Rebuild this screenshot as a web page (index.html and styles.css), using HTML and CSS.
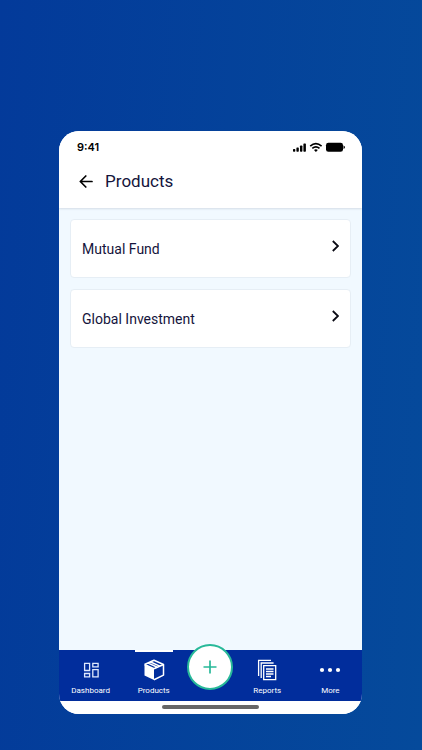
FILE: index.html
```html
<!DOCTYPE html>
<html lang="en">
<head>
<meta charset="utf-8">
<meta name="viewport" content="width=device-width, initial-scale=1">
<title>Products</title>
<link rel="stylesheet" href="styles.css">
</head>
<body>
<div class="phone">
  <header class="header">
    <div class="status">
      <span class="time">9:41</span>
      <svg class="status-icons" width="54" height="12" viewBox="0 0 54 12" aria-hidden="true">
        <g fill="#000">
          <rect x="1" y="8" width="2.3" height="2.8" rx=".7"/>
          <rect x="4.4" y="6.4" width="2.4" height="4.4" rx=".7"/>
          <rect x="8" y="4.600" width="2.400" height="6.200" rx=".7"/>
          <rect x="11.400" y="2.400" width="2.500" height="8.400" rx=".7"/>
          <rect x="34" y="1.800" width="17" height="9" rx="2.400"/>
          <path d="M51.500 4.600v3.400q1.500-.5 1.500-1.700t-1.500-1.700z"/>
          <path d="M22 9q1.900-1.300 3.800 0l-1.900 2z"/>
        </g>
        <g fill="none" stroke="#000" stroke-width="1.700">
          <path d="M18.200 5.100q5.700-4.900 11.400 0"/>
          <path d="M20.300 7.300q3.600-2.900 7.200 0"/>
        </g>
      </svg>
    </div>
    <div class="title-row">
      <button class="back" type="button" aria-label="Back">
        <svg width="14" height="14" viewBox="0 0 14 14" fill="none" stroke="#000" stroke-width="1.7" stroke-linecap="round" stroke-linejoin="round"><path d="M13 6.500H1.500M6.800 1 1.300 6.500l5.500 5.500"/></svg>
      </button>
      <h1 class="title">Products</h1>
    </div>
  </header>
  <main class="content">
    <a class="card" href="#mutual-fund">
      <span>Mutual Fund</span>
      <svg class="chevron" width="7" height="12" viewBox="0 0 7 12"><path d="M.8 1 6 6 .8 11"/></svg>
    </a>
    <a class="card" href="#global-investment">
      <span>Global Investment</span>
      <svg class="chevron" width="7" height="12" viewBox="0 0 7 12"><path d="M.8 1 6 6 .8 11"/></svg>
    </a>
  </main>
  <nav class="nav">
    <a class="tab" href="#dashboard">
      <svg width="22" height="22" viewBox="0 0 22 22" fill="none" stroke="#dfe9fd" stroke-width="1.300"><path d="M4.600 4.300h5v7.200h-5zM12.800 4.300h5.300v3.600h-5.300zM4.600 14.500h5v3.400h-5zM12.800 10.700h5.300v7.200h-5.300z"/></svg>
      <span>Dashboard</span>
    </a>
    <a class="tab active" href="#products" aria-current="page">
      <svg width="22" height="22" viewBox="0 0 22 22"><path d="M1.500 5.500 11 9.700V21l-9.500-4.600z" fill="#fff"/><path d="M1.500 5.500 11 1.300l9.500 4.200v10.600L11 20.700M11 9.700l9.500-4.200M11 9.700 1.500 5.500M5.200 4.100l9.200 4.100M7.600 3l9.200 4.100" fill="none" stroke="#fff" stroke-width="1.500" stroke-linejoin="round"/></svg>
      <span>Products</span>
    </a>
    <div class="add-slot">
      <button class="add" type="button" aria-label="Add">
        <svg width="14" height="14" viewBox="0 0 14 14" fill="none" stroke="#28b999" stroke-width="1.700"><path d="M7 .5v13M.5 7h13"/></svg>
      </button>
    </div>
    <a class="tab" href="#reports">
      <svg width="22" height="22" viewBox="0 0 22 22" fill="none" stroke="#fff" stroke-width="1.300"><path d="M2.600 17V1.400h12.400M5.200 19V4h12.400"/><path d="M7.700 6.700h12v14h-12zM10 10h7.500M10 12.500h7.500M10 15h7.500M10 17.500h5"/></svg>
      <span>Reports</span>
    </a>
    <a class="tab" href="#more">
      <svg width="22" height="22" viewBox="0 0 22 22" fill="#fff"><circle cx="3" cy="11" r="2.100"/><circle cx="11" cy="11" r="2.100"/><circle cx="19" cy="11" r="2.100"/></svg>
      <span>More</span>
    </a>
  </nav>
  <div class="home"><span class="home-bar"></span></div>
</div>
</body>
</html>
```
FILE: styles.css
```css
* { box-sizing: border-box; }
body {
  margin: 0;
  min-height: 100vh;
  padding: 131px calc(14% + 1px) 36px 14%;
  display: flex;
  background: linear-gradient(94deg, #033a9a, #054a9b);
  font-family: Roboto, sans-serif;
  color: #14143c;
}
a { color: inherit; text-decoration: none; }
button { padding: 0; border: 0; background: none; cursor: pointer; }
svg { display: block; }
.phone {
  flex: 1;
  display: flex;
  flex-direction: column;
  border-radius: 20px;
  overflow: hidden;
  background: #f1f9ff;
}
.header {
  padding: 8px 16px 16px 18px;
  background: #fff;
  box-shadow: 0 1px 2px #d3dce6;
}
.status { display: flex; align-items: center; justify-content: space-between; height: 16px; }
.time { font: 600 11px/16px Inter, sans-serif; color: #000; }
.title-row { display: flex; align-items: center; gap: 12px; padding-top: 16px; }
.back { padding: 0 0 0 2px; }
.title { margin: 0; font-size: 17px; line-height: 21px; font-weight: 400; }
.content { flex: 1; display: flex; flex-direction: column; gap: 11px; padding: 11px; }
.card {
  display: flex;
  align-items: center;
  justify-content: space-between;
  min-height: 59px;
  padding: 0 11px;
  border: 1px solid #e6eef5;
  border-radius: 4px;
  background: #fff;
  font-size: 14px;
  line-height: 20px;
}
.chevron { margin-bottom: 6px; fill: none; stroke: #0a0a14; stroke-width: 1.8; }
.nav {
  display: grid;
  grid-template-columns: 5fr 5fr 4fr 5fr 5fr;
  height: 51px;
  background: #012d9c;
  color: #fff;
}
.tab {
  position: relative;
  display: flex;
  flex-direction: column;
  align-items: center;
  gap: 4px;
  padding-top: 9px;
  font-size: 8px;
  line-height: 12px;
}
.active::before {
  content: "";
  position: absolute;
  top: 0;
  width: 38px;
  height: 2px;
  background: #fff;
}
.add-slot { position: relative; }
.add {
  position: absolute;
  top: -6px;
  left: 50%;
  width: 46px;
  height: 46px;
  margin-left: -23px;
  display: grid;
  place-items: center;
  border: 2px solid #28b999;
  border-radius: 50%;
  background: #fff;
}
.home { display: flex; justify-content: center; height: 13px; padding-top: 4px; background: #fff; }
.home-bar { width: 32%; height: 4px; border-radius: 2px; background: #666; }
```
